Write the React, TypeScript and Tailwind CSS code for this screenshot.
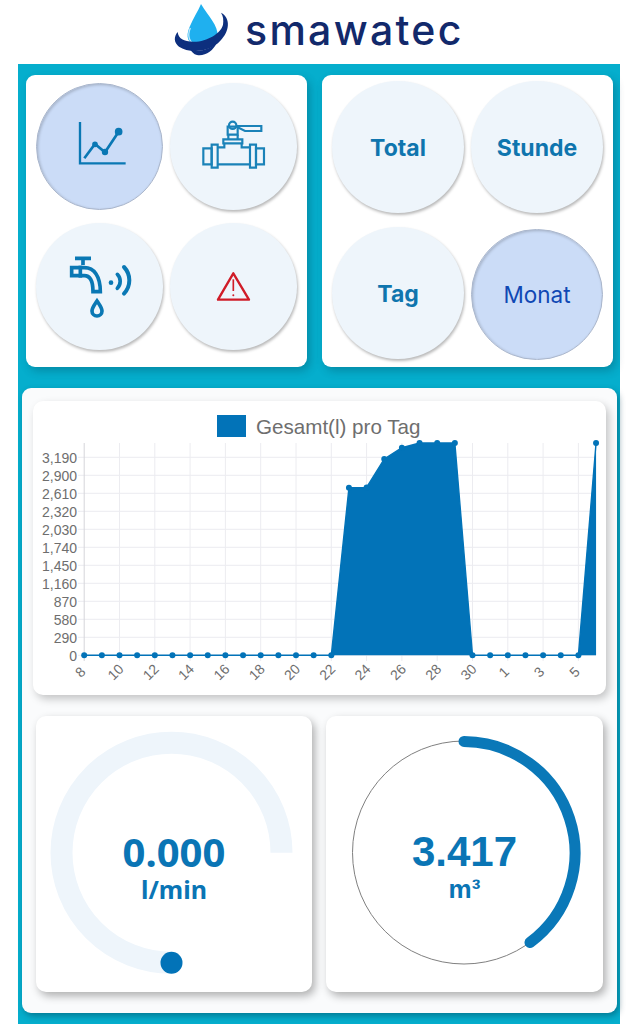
import type { ReactNode } from "react";

const BLUE = "#0273b8";

const yTicks = [3190, 2900, 2610, 2320, 2030, 1740, 1450, 1160, 870, 580, 290, 0];
const xLabels: Record<number, string> = {
  0: "8", 2: "10", 4: "12", 6: "14", 8: "16", 10: "18", 12: "20", 14: "22",
  16: "24", 18: "26", 20: "28", 22: "30", 24: "1", 26: "3", 28: "5",
};
const topY: Record<number, number> = {
  15: 487.7, 16: 487.4, 17: 459, 18: 447.7, 19: 443, 20: 443, 21: 443, 29: 443,
};

const baseY = 655.3;
const xAt = (i: number) => 84.2 + i * 17.65;
const yAt = (i: number) => topY[i] ?? baseY;
const yTick = (v: number) => baseY - (v / 290) * 18;

function ChartCard() {
  const idx = Array.from({ length: 30 }, (_, i) => i);
  const area1 = [14, 15, 16, 17, 18, 19, 20, 21, 22].map((i) => `${xAt(i)},${yAt(i)}`).join(" ");
  const area2 = [28, 29].map((i) => `${xAt(i)},${yAt(i)}`).join(" ");
  const line = idx.map((i) => `${xAt(i)},${yAt(i)}`).join(" ");

  return (
    <div className="h-[294px] w-[573px] rounded-[10px] bg-white shadow-[3px_4px_8px_rgba(0,0,0,0.22)]">
      <svg width="573" height="294" viewBox="33 401 573 294" fontFamily="'Liberation Sans', Arial, sans-serif">
        <rect x="217" y="415" width="29" height="22" fill={BLUE} />
        <text x="256" y="434" fontSize="20.6" fill="#6e6e6e">Gesamt(l) pro Tag</text>

        {yTicks.map((v) => (
          <g key={v}>
            <line x1="78" x2="596" y1={yTick(v)} y2={yTick(v)} stroke="#ececf0" />
            <text x="77" y={yTick(v) + 5.5} fontSize="14" fill="#6e6e6e" textAnchor="end">
              {v.toLocaleString("en-US")}
            </text>
          </g>
        ))}
        {idx.filter((i) => i % 2 === 0).map((i) => (
          <line key={i} x1={xAt(i)} x2={xAt(i)} y1="443" y2="661" stroke={i === 0 ? "#d5d5da" : "#ececf0"} />
        ))}

        <polygon points={`${area1} ${xAt(22)},${baseY}`} fill={BLUE} />
        <polygon points={`${area2} ${xAt(29)},${baseY}`} fill={BLUE} />
        <polyline points={line} fill="none" stroke={BLUE} strokeWidth="1.4" />
        {idx.map((i) => (
          <circle key={i} cx={xAt(i)} cy={yAt(i)} r="3" fill={BLUE} />
        ))}

        {Object.entries(xLabels).map(([i, label]) => {
          const x = xAt(Number(i)) - 4;
          return (
            <text key={i} x={x} y="677" fontSize="14" fill="#6e6e6e" textAnchor="middle" transform={`rotate(-45 ${x} 672)`}>
              {label}
            </text>
          );
        })}
      </svg>
    </div>
  );
}

function ChartIcon() {
  return (
    <svg width="128" height="126" viewBox="36 84 128 126" className="absolute inset-0">
      <g transform="translate(20 65) scale(0.3333)" fill="none" stroke="#0a78b4" strokeWidth="7">
        <path d="M177 171V295H314" />
        <path d="M190 280L222 237L252 262L293 200" strokeWidth="8" />
        <circle cx="222" cy="238" r="5" fill="#0a78b4" />
        <circle cx="252" cy="261" r="6" fill="#0a78b4" />
        <circle cx="293" cy="200" r="8" fill="#0a78b4" />
      </g>
    </svg>
  );
}

function ValveIcon() {
  return (
    <svg width="128" height="127" viewBox="170 82 128 127" className="absolute inset-0">
      <g transform="translate(195 115) scale(0.3333)" fill="none" stroke="#1a82b8" strokeWidth="6.5">
        <circle cx="113" cy="28" r="11" />
        <path d="M124 30H199V45H150L128 34" />
        <path d="M98 32H128V56H98Z" />
        <path d="M85 70H142V82H85Z" />
        <path d="M100 56V70M128 56V70" />
        <path d="M88 82V94H68M140 82V94H165M68 145H165" />
        <path d="M50 86H68V155H50Z" />
        <path d="M25 97H50V145H25Z" />
        <path d="M165 86H183V155H165Z" />
        <path d="M183 97H207V145H183Z" />
      </g>
    </svg>
  );
}

function TapIcon() {
  return (
    <svg width="128" height="127" viewBox="35 222 128 127" className="absolute inset-0">
      <g transform="translate(60 250) scale(0.3333)" fill="none" stroke="#0a78b4" strokeWidth="11">
        <path d="M42 22H90M66 22V42" />
        <path d="M32 50H70C100 50 118 76 118 122H96C96 92 88 74 70 74H32Z" />
        <path d="M58 44V80" />
        <path d="M108 150C100 162 93 170 93 180A15 15 0 0 0 123 180C123 170 116 162 108 150Z" />
        <circle cx="150" cy="95" r="7" fill="#0a78b4" stroke="none" />
        <path d="M169 70A30 30 0 0 1 169 112" strokeLinecap="round" />
        <path d="M189 48A58 58 0 0 1 189 128" strokeLinecap="round" strokeWidth="12" />
      </g>
    </svg>
  );
}

function WarnIcon() {
  return (
    <svg width="128" height="127" viewBox="170 222 128 127" className="absolute inset-0">
      <g transform="translate(20 65) scale(0.3333)" fill="none" stroke="#d01c28" strokeWidth="7">
        <path d="M640 622L687 701H594Z" strokeLinejoin="round" />
        <path d="M640 640V675" strokeWidth="5" />
        <circle cx="640" cy="688" r="3" fill="#d01c28" stroke="none" />
      </g>
    </svg>
  );
}

function Circle({ active, className, children }: { active?: boolean; className: string; children: ReactNode }) {
  return (
    <div
      className={`relative flex items-center justify-center rounded-full ${className} ${
        active
          ? "border border-[#aab6cb] bg-[#cbdcf7] shadow-[inset_1px_1px_3px_rgba(0,0,0,0.2)]"
          : "bg-[#eef5fb] shadow-[1px_2px_3px_rgba(0,0,0,0.28)]"
      }`}
    >
      {children}
    </div>
  );
}

function PeriodLabel({ children }: { children: ReactNode }) {
  return <span className="pt-[3px] font-['Inter',sans-serif] text-[23px] font-bold text-[#0f75ae]">{children}</span>;
}

function Logo() {
  return (
    <svg width="75" height="60" viewBox="0 0 225 180">
      <path d="M108 12C130 50 160 75 158 110C155 135 125 146 95 138C70 130 60 112 74 80C84 56 100 32 108 12Z" fill="#1fb0ef" />
      <path d="M76 84C66 108 72 128 96 137" fill="none" stroke="#bfe8fb" strokeWidth="4" />
      <path d="M168 38C198 54 194 94 166 122C135 158 72 160 42 140C26 128 26 110 38 96C40 116 56 124 85 125C125 126 168 100 174 74C176 60 175 48 168 38Z" fill="#0d2f7e" />
      <path d="M76 148C100 158 130 150 154 130C146 152 118 170 96 165C86 163 80 156 76 148Z" fill="#0d2f7e" />
    </svg>
  );
}

export default function App() {
  return (
    <div className="h-[1024px] w-[638px] overflow-hidden bg-white">
      <header className="flex h-[64px] items-start pl-[165px]">
        <Logo />
        <span className="ml-[5px] mt-[4px] font-['Inter',sans-serif] text-[41px] font-medium leading-[52px] tracking-[2.3px] text-[#12296b]">
          smawatec
        </span>
      </header>

      <div className="ml-[18px] h-[960px] w-[602px] bg-[#05aecd] pt-[11px]">
        <div className="flex pl-[8px]">
          <div className="grid h-[292px] w-[281px] grid-cols-[127px_127px] content-start gap-x-[7px] gap-y-[13px] rounded-[9px] bg-white pl-[10px] pt-[8px] shadow-[3px_4px_8px_rgba(0,60,80,0.3)]">
            <Circle active className="h-[127px] w-[127px]"><ChartIcon /></Circle>
            <Circle className="h-[127px] w-[127px]"><ValveIcon /></Circle>
            <Circle className="h-[127px] w-[127px]"><TapIcon /></Circle>
            <Circle className="h-[127px] w-[127px]"><WarnIcon /></Circle>
          </div>
          <div className="ml-[15px] grid h-[292px] w-[291px] grid-cols-[132px_132px] content-start gap-x-[7px] gap-y-[14px] rounded-[9px] bg-white pl-[10px] pt-[6px] shadow-[3px_4px_8px_rgba(0,60,80,0.3)]">
            <Circle className="h-[132px] w-[132px]"><PeriodLabel>Total</PeriodLabel></Circle>
            <Circle className="h-[132px] w-[132px]"><PeriodLabel>Stunde</PeriodLabel></Circle>
            <Circle className="h-[132px] w-[132px]"><PeriodLabel>Tag</PeriodLabel></Circle>
            <Circle active className="mt-[2px] h-[131px] w-[132px]">
              <span className="pt-[1px] font-['Inter',sans-serif] text-[22.5px] text-[#1048b4]">Monat</span>
            </Circle>
          </div>
        </div>

        <div className="ml-[4px] mt-[21px] h-[625px] w-[595px] rounded-[9px] bg-[#fafbfc] pl-[11px] pt-[13px] shadow-[2px_3px_6px_rgba(0,60,80,0.45)]">
          <ChartCard />
          <div className="ml-[3px] mt-[21px] flex gap-[14px]">
            <div className="relative flex h-[276px] w-[276px] flex-col items-center justify-center rounded-[10px] bg-white pt-[26px] shadow-[3px_4px_8px_rgba(0,0,0,0.3)]">
              <svg width="276" height="276" viewBox="0 0 276 276" className="absolute inset-0">
                <path d="M245.5 136.7A110 110 0 1 0 135.5 246.7" fill="none" stroke="#eef5fb" strokeWidth="22" />
                <circle cx="135.5" cy="246.7" r="11" fill={BLUE} />
              </svg>
              <span className="relative font-[family-name:Noto_Sans,sans-serif] text-[40px] font-bold leading-[44px] text-[#0a75b5]">0.000</span>
              <span className="relative font-[family-name:Noto_Sans,sans-serif] text-[25px] font-bold leading-[30px] text-[#0a75b5]">l/min</span>
            </div>
            <div className="relative flex h-[276px] w-[277px] flex-col items-center justify-center rounded-[10px] bg-white pt-[26px] shadow-[3px_4px_8px_rgba(0,0,0,0.3)]">
              <svg width="277" height="276" viewBox="0 0 277 276" className="absolute inset-0">
                <circle cx="138" cy="136.5" r="111.5" fill="none" stroke="#808080" strokeWidth="1" />
                <path d="M138 25.5A111.5 111.5 0 0 1 204 226.5" fill="none" stroke="#0a78b8" strokeWidth="11" strokeLinecap="round" />
              </svg>
              <span className="relative font-['Liberation_Sans',Arial,sans-serif] text-[42px] font-bold leading-[44px] text-[#0a75b5]">3.417</span>
              <span className="relative font-['Liberation_Sans',Arial,sans-serif] text-[26px] font-bold leading-[30px] text-[#0a75b5]">m³</span>
            </div>
          </div>
        </div>
      </div>
    </div>
  );
}
